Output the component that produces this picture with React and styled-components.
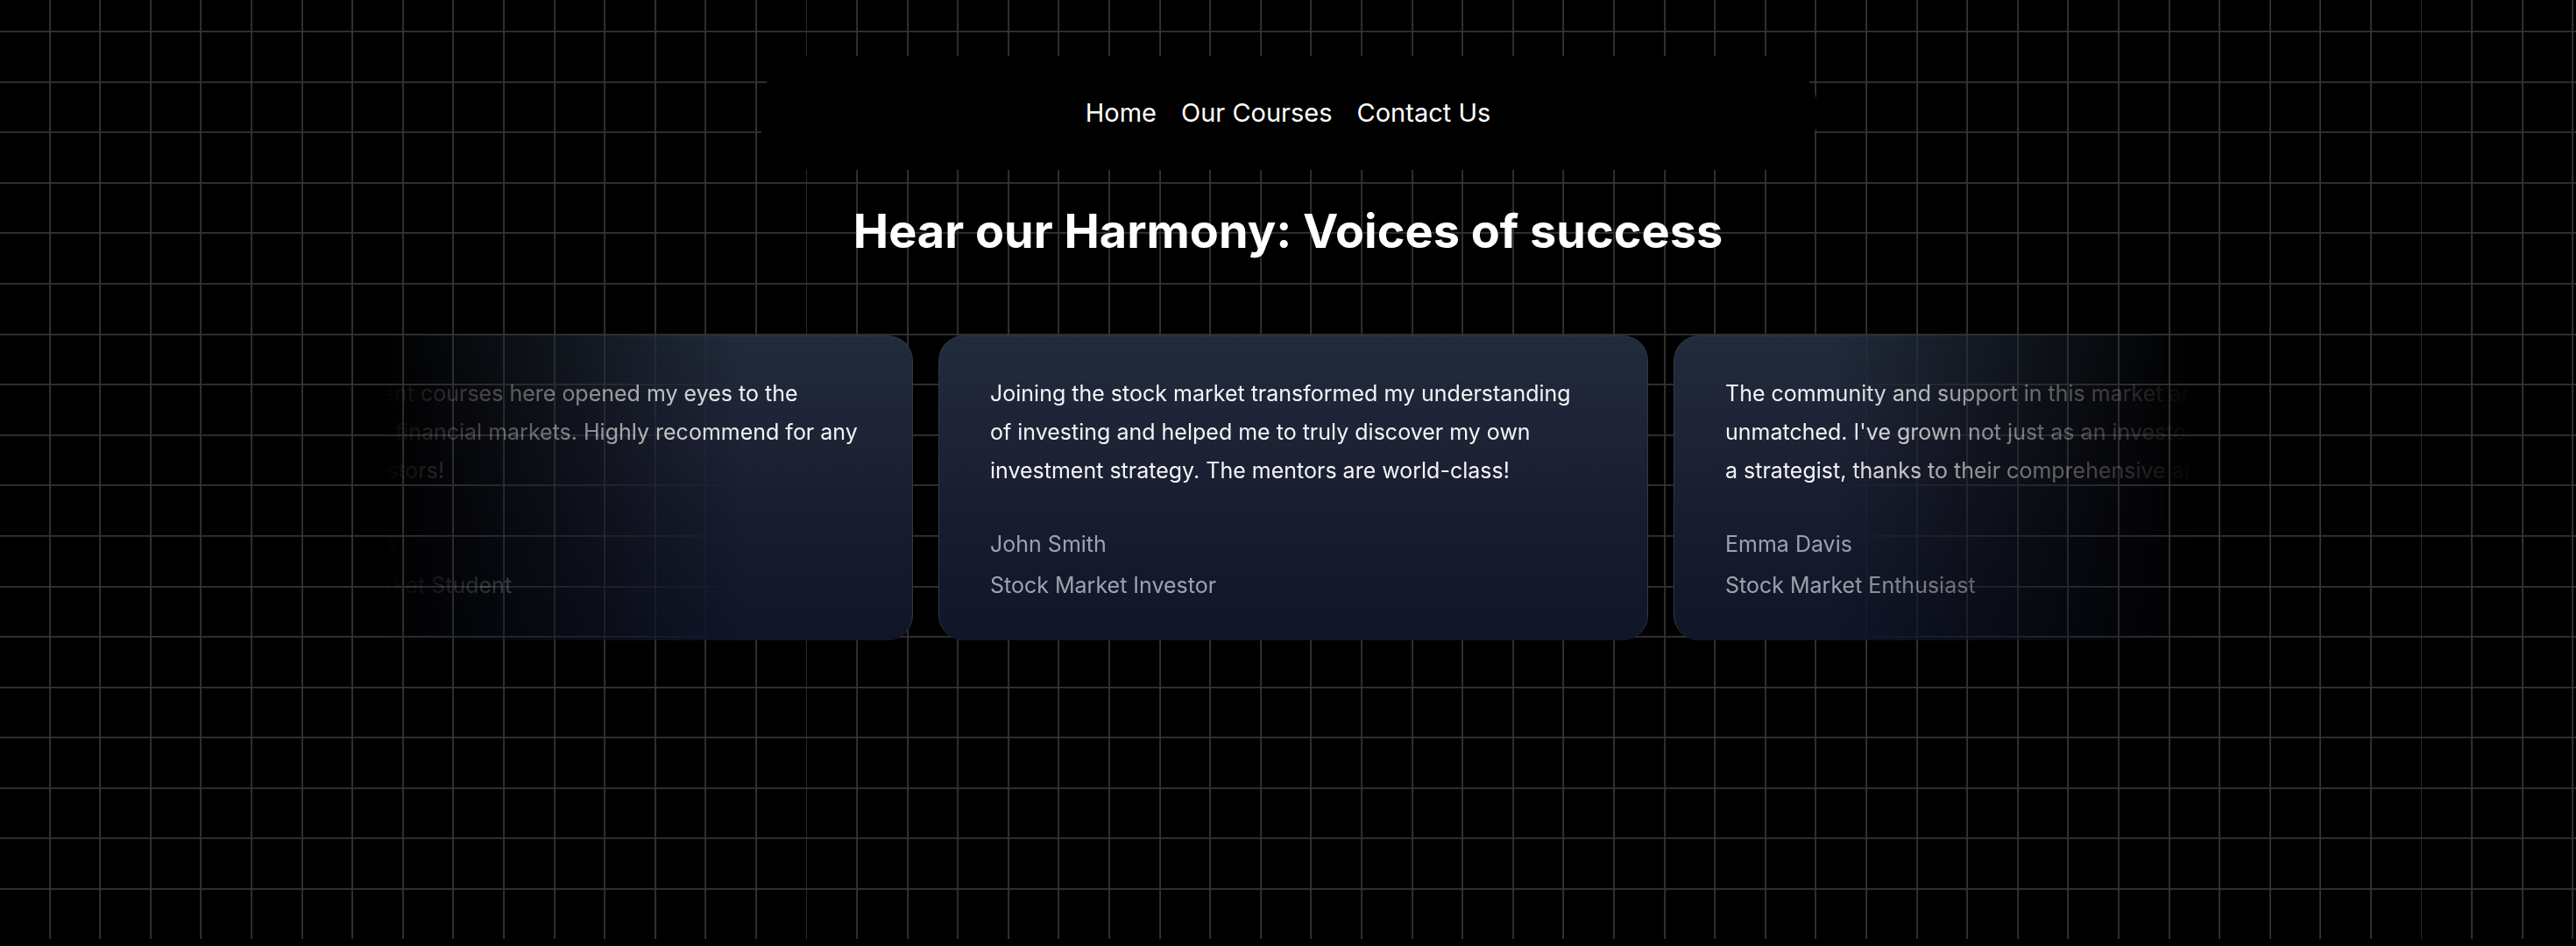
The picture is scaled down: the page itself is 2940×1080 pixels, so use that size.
import React from "react";
import styled, { createGlobalStyle } from "styled-components";

const GlobalStyle = createGlobalStyle`
  *, *::before, *::after { box-sizing: border-box; }
  html { background: #000; }
  body {
    margin: 0;
    overflow: hidden;
    background: #000;
    color: #fff;
    font-family: Inter, "Liberation Sans", sans-serif;
  }
`;

const GRID = encodeURIComponent(
  `<svg xmlns="http://www.w3.org/2000/svg" viewBox="0 0 32 32" width="32" height="32" fill="none" stroke="rgb(255 255 255 / 0.2)"><path d="M0 .5H31.5V32"/></svg>`
);

const Page = styled.main`
  display: flex;
  flex-direction: column;
  align-items: center;
  min-height: 1072px;
  padding-top: 64px;
  background: #000 url("data:image/svg+xml,${GRID}") 0 35px / 57.6px 57.6px;
`;

const NavBar = styled.nav`
  display: flex;
  justify-content: center;
  gap: 28px;
  width: 100%;
  max-width: 1210px;
  padding: 43px 0 44px;
  border-radius: 65px;
  background: #000;
`;

const NavLink = styled.a`
  color: #fff;
  font-size: 29px;
  line-height: 43px;
  text-decoration: none;
`;

const Heading = styled.h1`
  margin: 37px 0 57px;
  font-size: 54px;
  line-height: 65px;
  font-weight: 700;
  text-align: center;
`;

const Scroller = styled.section`
  display: flex;
  justify-content: center;
  width: 100%;
  max-width: 2068px;
  overflow: hidden;
  padding: 30px 0 30px 12px;
  mask-image: linear-gradient(to right, transparent, #fff 20%, #fff 80%, transparent);
`;

const CardList = styled.ul`
  display: flex;
  flex-shrink: 0;
  gap: 29px;
  margin: 0;
  padding: 0;
  list-style: none;
`;

const Card = styled.li`
  width: 810px;
  flex-shrink: 0;
  padding: 43px 60px 43px 58px;
  border: 1px solid #2c3b4b;
  border-bottom: 0;
  border-radius: 29px;
  background: linear-gradient(180deg, #212b3b, #1e2336 33%, #181c2e 60%, #101528);
`;

const Quote = styled.blockquote`
  margin: 0;
  color: #f3f4f6;
  font-size: 25px;
  line-height: 44px;
`;

const Author = styled.footer`
  display: flex;
  flex-direction: column;
  gap: 7px;
  margin-top: 42px;
  color: #9ca3af;
  font-size: 25px;
  line-height: 40px;
`;

const links = ["Home", "Our Courses", "Contact Us"];

const testimonials = [
  {
    quote:
      "The investment courses here opened my eyes to the intricacies of financial markets. Highly recommend for any aspiring investors!",
    name: "Emily Roberts",
    title: "Financial Market Student",
  },
  {
    quote:
      "Joining the stock market transformed my understanding of investing and helped me to truly discover my own investment strategy. The mentors are world-class!",
    name: "John Smith",
    title: "Stock Market Investor",
  },
  {
    quote:
      "The community and support in this market arena are unmatched. I've grown not just as an investor but also as a\u00a0strategist, thanks to their comprehensive approach.",
    name: "Emma Davis",
    title: "Stock Market Enthusiast",
  },
];

export default function App() {
  return (
    <>
      <GlobalStyle />
      <Page>
        <NavBar>
          {links.map((label) => (
            <NavLink key={label} href="#">
              {label}
            </NavLink>
          ))}
        </NavBar>
        <Heading>Hear our Harmony: Voices of success</Heading>
        <Scroller>
          <CardList>
            {testimonials.map((t) => (
              <Card key={t.name}>
                <Quote>{t.quote}</Quote>
                <Author>
                  <span>{t.name}</span>
                  <span>{t.title}</span>
                </Author>
              </Card>
            ))}
          </CardList>
        </Scroller>
      </Page>
    </>
  );
}
